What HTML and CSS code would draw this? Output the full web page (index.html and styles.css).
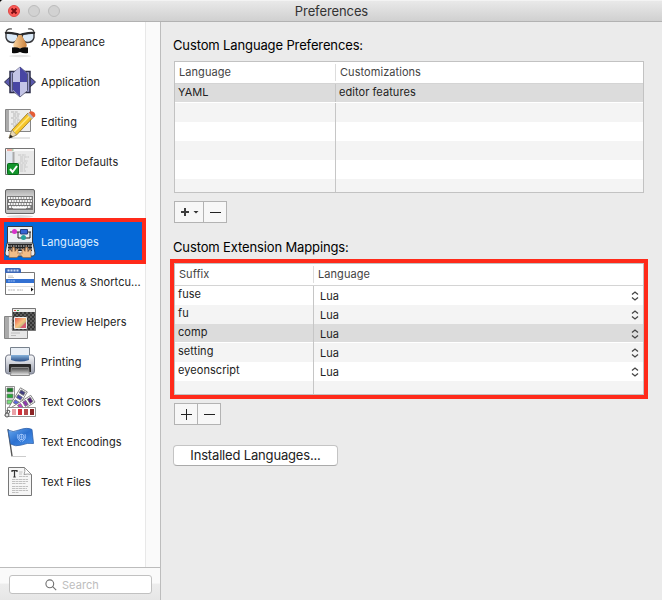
FILE: index.html
```html
<!DOCTYPE html>
<html lang="en">
<head>
<meta charset="utf-8">
<title>Preferences</title>
<link rel="stylesheet" href="styles.css">
</head>
<body>
<div class="window">
  <header class="titlebar">
    <div class="lights">
      <span class="light close"><svg viewBox="0 0 12 12"><path d="M3.500 3.500l5 5M8.500 3.500l-5 5" stroke="#7a0d12" stroke-width="2"/></svg></span>
      <span class="light"></span>
      <span class="light"></span>
    </div>
    <h1>Preferences</h1>
  </header>
  <div class="body">
    <aside class="sidebar">
      <div class="scroll">
        <nav class="list">
          <a class="item"><svg class="icon" viewBox="0 0 41 40">
            <defs><linearGradient id="nose" x2="1"><stop stop-color="#f9d3a0"/><stop offset="1" stop-color="#c9803a"/></linearGradient></defs>
            <ellipse cx="20" cy="34" rx="11" ry="1.200" fill="#e4e4e4"/>
            <path d="M6 11l11 1 1 3q-1 5-5 5.500q-6 0-7-5zM34 11l-11 1-1 3q1 5 5 5.500q6 0 7-5z" fill="#dbeaf8" stroke="#39393d" stroke-width="1.400"/>
            <path d="M5 11q3-1 12 1l3 1 3-1q9-2 12-1" fill="none" stroke="#29292b" stroke-width="2"/>
            <path d="M6 10q1-4 6-3M34 10q-1-4-6-3" fill="none" stroke="#444" stroke-width="1.200"/>
            <path d="M18.500 13h3l5 9q1 3-2 4H15.500q-3-1-2-4z" fill="url(#nose)"/>
            <path d="M12 25.500q4-1 8 1q4-2 8-1v5.500q-4 1-8-1q-4 2-8 1z" fill="#0b0b0b"/>
          </svg><span>Appearance</span></a>
          <a class="item"><svg class="icon" viewBox="0 0 41 40">
            <path d="M4.500 20l6-5.500h19l6 5.500-6 5.500h-19z" fill="#5a59ad" stroke="#2e2f4a"/>
            <path d="M10 9.500h20v21H10z" fill="#9a9bcf" stroke="#2e2f4a" stroke-width="1.500"/>
            <path d="M20 5l7.500 6.500v17L20 35l-7.500-6.500v-17z" fill="#e5e5f3" stroke="#555775"/>
            <path d="M20 5l7 6.500V20h-7zM20 20v14.500l-7-6.500v-8z" fill="#4846a3"/>
            <path d="M20 5l-7 6.500V20h7zM20 20h7v8l-7 6.500z" fill="#c4c5e7"/>
          </svg><span>Application</span></a>
          <a class="item"><svg class="icon" viewBox="0 0 41 40">
            <path d="M5.500 7.500h25v22h-25z" fill="#ededed" stroke="#858585"/><path d="M6 8h3v21H6z" fill="#aaa"/>
            <path d="M11 10h7M13 12h7M13 14h6M11 16h8M13 18h7M13 20h5M11 22h6M13 24h3" stroke="#b5b5b5" stroke-dasharray="3 .7"/>
            <path d="M10 36h20" stroke="#ccc"/>
            <path d="M9 36l3-8L28 11l5 4.500L16.500 33z" fill="#f5c62b" stroke="#94701c" stroke-width=".8"/>
            <path d="M14 30L30 13.500" stroke="#ffe780" stroke-width="1.500"/>
            <path d="M9 36l3-8 4.500 5z" fill="#ead9b4" stroke="#777" stroke-width=".5"/><path d="M9 36.500l1.500-4 2.500 2.500z" fill="#222"/>
            <path d="M27 12.500l2.500-2.500 5 4.500-2.500 2.500z" fill="#b9bdc3"/><path d="M29 10.500q2-2 4.500-.5t1.500 4.500l-1.500 1z" fill="#e55c36"/>
          </svg><span>Editing</span></a>
          <a class="item"><svg class="icon" viewBox="0 0 41 40">
            <path d="M5.500 6.500h29v26h-29z" fill="#e9e9e9" stroke="#737373"/>
            <path d="M6 7h28v2H6z" fill="#fafafa"/><path d="M7 8h5" stroke="#dc5c48"/><path d="M12 8h1.500" stroke="#65a856"/>
            <path d="M6 10h8v22H6z" fill="#e2e8f0"/><path d="M13.500 10v22" stroke="#aaa" stroke-width="2"/>
            <path d="M18 13h8M20 15h9M20 17h5M20 19h8M18 21h9M20 23h6M20 25h8M20 27h5M20 29h6" stroke="#c5c5c5" stroke-dasharray="3 .7"/>
            <rect x="7.500" y="21.500" width="11" height="11" rx="1" fill="#13952c" stroke="#096719"/>
            <path d="M10 27l2.500 3L17 24" fill="none" stroke="#fff" stroke-width="2"/>
          </svg><span>Editor Defaults</span></a>
          <a class="item"><svg class="icon" viewBox="0 0 41 40">
            <defs><linearGradient id="kb" x2="0" y2="1"><stop stop-color="#aaa"/><stop offset=".4" stop-color="#e3e3e3"/><stop offset="1" stop-color="#bbb"/></linearGradient></defs>
            <ellipse cx="20" cy="34.500" rx="13" ry="1.500" fill="#ddd"/>
            <rect x="5.500" y="7.500" width="29" height="24" rx="1.500" fill="url(#kb)" stroke="#656565"/>
            <path d="M7 14h26v14H7z" fill="#777"/>
            <path d="M8 16h24M9 19h23M8 22h24M9 25h22" stroke="#f5f5f5" stroke-width="2" stroke-dasharray="2 .7"/><path d="M13 25.500h13" stroke="#fff" stroke-width="2"/>
          </svg><span>Keyboard</span></a>
          <a class="item selected"><svg class="icon" viewBox="0 0 41 40">
            <path d="M7.500 4.500h25v18h-25z" fill="#edf0f2" stroke="#343b45"/>
            <path d="M10 10h21M18 10v6h12v-6" fill="none" stroke="#222"/>
            <circle cx="14.500" cy="9.500" r="2.500" fill="#d833ca"/><path d="M20.500 7.500h7v4.500h-7z" fill="#3564d3" stroke="#253d7b"/><circle cx="23.500" cy="15.500" r="2.500" fill="#25a29b"/>
            <path d="M7 21h26l2 10q0 3-2 3H7q-2 0-2-3z" fill="#e8e8e8" stroke="#3c3f42"/>
            <path d="M8 22h24v7H8z" fill="#232323"/><path d="M8 24h24M8 27h24" stroke="#ddd" stroke-dasharray="1.500 1"/>
            <path d="M9 35.500q0-2 0-5v-3l2 .5 1 2 .5-5 2 .5.500 4 2-3 1 1v4l1-1q2 1-2 5z" fill="#f2bd88" stroke="#96613b" stroke-width=".6"/>
            <path d="M31 35.500q0-2 0-5v-3l-2 .5-1 2-.5-5-2 .5-.5 4-2-3-1 1v4l-1-1q-2 1 2 5z" fill="#f2bd88" stroke="#96613b" stroke-width=".6"/>
          </svg><span>Languages</span></a>
          <a class="item"><svg class="icon" viewBox="0 0 41 40">
            <path d="M5.500 10.500h29v22h-29z" fill="#fff" stroke="#777"/>
            <path d="M5 7q0-1 1-1h13q2 0 2 2v3H5z" fill="#3f69b6"/><path d="M7.500 8.500h11" stroke="#c8dcf7" stroke-width="2" stroke-dasharray="2 1"/>
            <path d="M8 14h5M8 15.500h6" stroke="#ccc"/><path d="M6 17h28v4H6z" fill="#3270d2"/><path d="M8 19h7" stroke="#9abaf0" stroke-dasharray="2 .5"/>
            <path d="M6 24.500h28" stroke="#ddd"/><path d="M8 28h7M17 28h6" stroke="#bbb" stroke-dasharray="2 .5"/><path d="M31 25.500l2.500 2-2.500 2z" fill="#111"/>
          </svg><span>Menus &amp; Shortcu...</span></a>
          <a class="item"><svg class="icon" viewBox="0 0 41 40">
            <defs><linearGradient id="rainbow" x2="1" y2="1"><stop stop-color="#e3524b"/><stop offset=".5" stop-color="#fac281"/><stop offset="1" stop-color="#6fa870"/></linearGradient>
            <pattern id="checks" width="4" height="4" patternUnits="userSpaceOnUse"><path d="M0 0h4v4H0z" fill="#353535"/><path d="M0 0h2v2H0zM2 2h2v2H2z" fill="#5c5c5c"/></pattern></defs>
            <path d="M4.500 14.500h23v22h-23z" fill="#e7e7e7" stroke="#858585"/><path d="M5 15h4v21H5z" fill="#aaa"/><path d="M11 18h1M11 21h1M11 24h1M11 27h1M11 31h9M11 33.500h5" stroke="#bbb"/>
            <path d="M12.500 6.500h23v22h-23z" fill="url(#checks)" stroke="#777"/><path d="M13 7h22v3H13z" fill="#ebebeb"/><path d="M14 8.500h2" stroke="#e04b45"/><path d="M17 8.500h2" stroke="#46a34e"/>
            <path d="M14.500 15.500h12v11h-12z" fill="url(#rainbow)" stroke="#eee"/><path d="M20 26l6-6v6z" fill="#d75c72"/>
          </svg><span>Preview Helpers</span></a>
          <a class="item"><svg class="icon" viewBox="0 0 41 40">
            <defs><linearGradient id="print" x2="0" y2="1"><stop stop-color="#f7f8fa"/><stop offset="1" stop-color="#999ead"/></linearGradient><linearGradient id="blue" x2="0" y2="1"><stop stop-color="#86b3dc"/><stop offset="1" stop-color="#294d86"/></linearGradient><linearGradient id="tray" x2="0" y2="1"><stop stop-color="#444"/><stop offset="1" stop-color="#eee"/></linearGradient></defs>
            <path d="M10.500 5.500h19v14h-19z" fill="#e6edf4" stroke="#77818c"/>
            <path d="M8 13h24q2 0 2.500 3v13q0 3-3 3h-23q-3 0-3-3V16q.5-3 2.500-3z" fill="url(#print)" stroke="#767b88"/>
            <path d="M11 6h18v8H11z" fill="#e9eff6"/><path d="M11 13h18v5q-9 3-18 0z" fill="url(#blue)"/>
            <path d="M9 23q0-1 1-1h20q1 0 1 1v7H9z" fill="#292929"/><path d="M11.500 25.500h17l1 8h-19z" fill="url(#tray)" stroke="#888"/>
          </svg><span>Printing</span></a>
          <a class="item"><svg class="icon" viewBox="0 0 41 40">
            <g stroke="#777" stroke-width=".8" fill="#fff">
              <path d="M5.500 4.500h9v28h-9z"/><path d="M7 6h6v4H7z" fill="#177c25"/><path d="M7 12h6v4H7z" fill="#27a938"/><path d="M7 18h6v4H7z" fill="#74df78"/>
              <g transform="rotate(31 10 31)"><path d="M6 4h8v27H6z"/><path d="M7.500 5.500h5V9h-5z" fill="#413e80"/><path d="M7.500 11h5v3.500h-5z" fill="#4745ad"/><path d="M7.500 17h5v3.500h-5z" fill="#5b67df"/></g>
              <g transform="rotate(58 10 31)"><path d="M6 4h8v27H6z"/><path d="M7.500 5.500h5V9h-5z" fill="#531b7d"/><path d="M7.500 11h5v3.500h-5z" fill="#8f39ad"/><path d="M7.500 17h5v3.500h-5z" fill="#cc3cc7"/></g>
              <path d="M7.500 25.500h28v9h-28z"/></g>
            <path d="M12 27h4v6h-4z" fill="#e9a1a7"/><path d="M18 27h4v6h-4z" fill="#d5303a"/><path d="M24 27h4v6h-4z" fill="#b84a4c"/><path d="M30 27h4v6h-4z" fill="#8b2425"/>
            <path d="M5 34l3-6 2 1-2 4" fill="none" stroke="#555"/><circle cx="7" cy="33" r="2" fill="#ddd" stroke="#555"/>
          </svg><span>Text Colors</span></a>
          <a class="item"><svg class="icon" viewBox="0 0 41 40">
            <defs><linearGradient id="flag" x2="1" y2="1"><stop stop-color="#6babf0"/><stop offset=".5" stop-color="#2c71d0"/><stop offset="1" stop-color="#4b95ed"/></linearGradient></defs>
            <path d="M11 34.500h15" stroke="#ccc"/><path d="M8 7l4 27" stroke="#555" stroke-width="1.400"/>
            <path d="M8 8q5 3 11 0 8-3 13-.5l1.500 14q-6-1-12 1.500-6 2-11-1z" fill="url(#flag)" stroke="#2d60aa" stroke-width=".8"/>
            <circle cx="21.500" cy="15" r="2.700" fill="none" stroke="#a6caff"/><path d="M19 15h5M21.500 12v6" stroke="#b7d5ff" stroke-width=".6"/><path d="M18 12q-2 5 3 7.500M25 12q2 5-3 7.500" fill="none" stroke="#a6caff" stroke-width=".8"/>
          </svg><span>Text Encodings</span></a>
          <a class="item"><svg class="icon" viewBox="0 0 41 40">
            <path d="M8.500 5.500h16l7 7v21h-23z" fill="#f6f6f6" stroke="#777"/><path d="M24.500 5.500q1 4-.5 7 4-1 7.500 0z" fill="#fff" stroke="#888" stroke-width=".8"/>
            <path d="M12 10V8.700h5V10M14.500 9v6M13.300 15h2.400" fill="none" stroke="#333" stroke-width="1.200"/>
            <path d="M19 10h4M19 12h3M19 14.500h9M12 17.500h16M12 19.500h16M12 21.500h14M12 24.500h16M12 26.500h15M12 28.500h16M12 30.500h7" stroke="#b2b2b2" stroke-width=".8" stroke-dasharray="3 .5"/>
          </svg><span>Text Files</span></a>
        </nav>
        <div class="track"></div>
      </div>
      <footer class="search-bar">
        <div class="search"><svg viewBox="0 0 12 12"><circle cx="4.800" cy="4.800" r="3.900"/><path d="M7.700 7.700l3.500 3.500"/></svg><span>Search</span></div>
      </footer>
    </aside>
    <main class="content">
      <h2>Custom Language Preferences:</h2>
      <div class="table prefs">
        <div class="row head"><div>Language</div><div>Customizations</div></div>
        <div class="row active"><div>YAML</div><div>editor features</div></div>
        <div class="row alt"><div></div><div></div></div>
        <div class="row"><div></div><div></div></div>
        <div class="row alt"><div></div><div></div></div>
        <div class="row"><div></div><div></div></div>
        <div class="row alt"><div></div><div></div></div>
      </div>
      <div class="buttons">
        <button class="wide"><svg width="28" height="20" viewBox="0 0 28 20"><path d="M6 10h8M10 6v8" stroke="#3d3d3d" stroke-width="2"/><path d="M18.500 9h5L21 11.500z" fill="#333"/></svg></button>
        <button><svg width="22" height="20" viewBox="0 0 22 20"><path d="M6 10.500h11" stroke="#222"/></svg></button>
      </div>
      <h2 class="second">Custom Extension Mappings:</h2>
      <div class="table maps">
        <div class="row head"><div>Suffix</div><div>Language</div></div>
        <div class="row"><div>fuse</div><div>Lua<svg class="step" viewBox="0 0 8 10"><path d="M1 3.500L4 1l3 2.500M1 6.500L4 9l3-2.500"/></svg></div></div>
        <div class="row alt"><div>fu</div><div>Lua<svg class="step" viewBox="0 0 8 10"><path d="M1 3.500L4 1l3 2.500M1 6.500L4 9l3-2.500"/></svg></div></div>
        <div class="row active"><div>comp</div><div>Lua<svg class="step" viewBox="0 0 8 10"><path d="M1 3.500L4 1l3 2.500M1 6.500L4 9l3-2.500"/></svg></div></div>
        <div class="row alt"><div>setting</div><div>Lua<svg class="step" viewBox="0 0 8 10"><path d="M1 3.500L4 1l3 2.500M1 6.500L4 9l3-2.500"/></svg></div></div>
        <div class="row"><div>eyeonscript</div><div>Lua<svg class="step" viewBox="0 0 8 10"><path d="M1 3.500L4 1l3 2.500M1 6.500L4 9l3-2.500"/></svg></div></div>
        <div class="row alt"><div></div><div></div></div>
      </div>
      <div class="buttons lower">
        <button><svg width="22" height="20" viewBox="0 0 22 20"><path d="M6 10.500h11M11.500 5v11" stroke="#222"/></svg></button>
        <button><svg width="22" height="20" viewBox="0 0 22 20"><path d="M6 10.500h11" stroke="#222"/></svg></button>
      </div>
      <button class="installed">Installed Languages...</button>
    </main>
  </div>
</div>
</body>
</html>
```
FILE: styles.css
```css
*, *::after { box-sizing: border-box; }
body { margin: 0; background: #000; font-family: Inter, "Liberation Sans", sans-serif; font-size: 11px; letter-spacing: .06px; color: #222; }
.window { width: 662px; height: 600px; display: flex; flex-direction: column; background: #ebebeb; border-radius: 4px 0 0 0; overflow: hidden; }
.titlebar { height: 22px; flex: none; display: grid; grid-template-columns: 1fr auto 1fr; align-items: center; background: linear-gradient(#e9e9e9, #d0d0d0); border-top: 1px solid #f3f3f3; border-bottom: 1px solid #b2b2b2; }
.titlebar h1 { margin: 0; font-size: 13px; font-weight: 400; letter-spacing: -.1px; color: #333; line-height: 20px; padding-left: 1px; }
.lights { display: flex; gap: 8px; padding-left: 8px; }
.light { width: 12px; height: 12px; border-radius: 50%; border: 1px solid #bcbcbc; background: #d2d2d2; }
.light.close { background: #fc5b57; border-color: #df4744; }
.light svg { display: block; width: 12px; height: 12px; margin: -1px; }
.body { flex: 1; display: flex; min-height: 0; }
.sidebar { width: 161px; flex: none; display: flex; flex-direction: column; border-right: 1px solid #bdbdbd; }
.scroll { flex: 1; display: flex; min-height: 0; background: #fff; }
.list { width: 145px; }
.track { flex: 1; background: #fafafa; border-left: 1px solid #e8e8e8; }
.item { height: 40px; display: flex; align-items: center; white-space: nowrap; position: relative; }
.icon { width: 41px; height: 40px; flex: none; }
.item.selected { background: #0468d7; color: #dfeeff; }
.item.selected::after { content: ""; position: absolute; left: 0; top: -4px; width: 146px; height: 46px; border: 4px solid #ff2a1a; }
.search-bar { height: 33px; border-top: 1px solid #bcbcbc; padding: 7px 8px 0 9px; background: linear-gradient(#fafafa 0 48%, #ededed 49%, #e6e6e6); }
.search { height: 19px; display: flex; align-items: center; padding-left: 35px; gap: 5px; background: #fff; border: 1px solid #c1c1c1; border-radius: 3px; color: #bdbdbd; }
.search svg { width: 12px; height: 12px; fill: none; stroke: #707070; stroke-width: 1.1; }
.content { flex: 1; padding: 15px 18px 0 13px; }
h2 { margin: 0 0 0 -1px; height: 24px; font-size: 13px; line-height: 17px; font-weight: 400; letter-spacing: -.13px; color: #000; }
.second { margin-top: 16px; }
.table { width: 470px; height: 132px; border: 1px solid #c2c2c2; background: #fff; overflow: hidden; }
.row { display: grid; height: 19px; line-height: 16px; }
.prefs .row { grid-template-columns: 161px 1fr; }
.maps .row { grid-template-columns: 139px 1fr; }
.row > div { padding-left: 3px; }
.row > div:first-child { border-right: 1px solid #c6c6c6; }
.row.alt { background: #f4f4f4; }
.row.active { background: #dcdcdc; border-bottom: 1px solid #fff; }
.row.head { height: 22px; line-height: 17px; padding: 2px 0; border-bottom: 1px solid #d4d4d4; color: #444; }
.row.head > div { padding-left: 4px; }
.row.head > div:first-child { border-color: #ddd; }
.maps .row:not(.head) > div:last-child { display: flex; justify-content: space-between; align-items: flex-start; padding: 1px 4px 0 6px; line-height: 19px; }
.step { width: 8px; height: 10px; margin-top: 4px; fill: none; stroke: #444; stroke-width: 1.3; }
.maps { position: relative; overflow: visible; }
.maps .row:last-child { height: 13px; }
.maps::after { content: ""; position: absolute; left: -5px; top: -5px; width: 478px; height: 140px; border: 4px solid #ff2a1a; }
.buttons { display: flex; margin-top: 8px; height: 22px; }
.buttons button { padding: 0; width: 24px; height: 22px; border: 1px solid #b3b3b3; background: #f7f7f7; margin: 0; }
.buttons button + button { margin-left: -1px; }
.buttons .wide { width: 30px; }
.buttons svg { display: block; }
.lower { margin-top: 8px; }
.installed { display: block; width: 165px; height: 21px; margin: 20px 0 0 -1px; padding: 0 0 2px; border: 1px solid #c4c4c4; border-bottom-color: #aaa; border-radius: 4px; background: #fff; font: 13px Inter, sans-serif; letter-spacing: -.17px; color: #222; }
```
